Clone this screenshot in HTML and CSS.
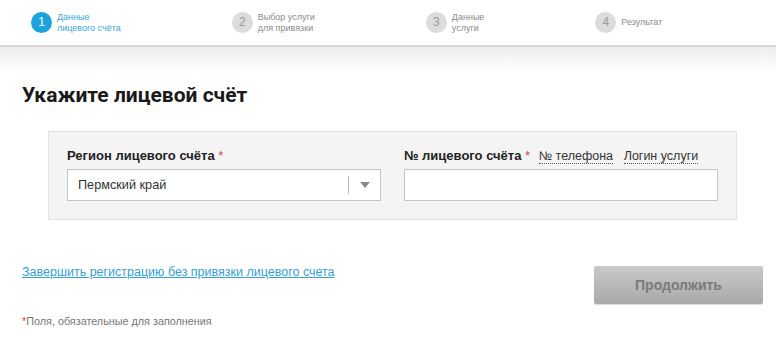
FILE: index.html
```html
<!DOCTYPE html>
<html lang="ru">
<head>
  <meta charset="UTF-8">
  <title>Привязка лицевого счёта</title>
  <link rel="stylesheet" href="styles.css">
</head>
<body>
  <div class="steps">
    <div class="step step-active">
      <span class="step-num">1</span>
      <span class="step-text">Данные<br>лицевого счёта</span>
    </div>
    <div class="step">
      <span class="step-num">2</span>
      <span class="step-text">Выбор услуги<br>для привязки</span>
    </div>
    <div class="step">
      <span class="step-num">3</span>
      <span class="step-text">Данные<br>услуги</span>
    </div>
    <div class="step">
      <span class="step-num">4</span>
      <span class="step-text">Результат</span>
    </div>
  </div>

  <div class="page">
    <h1 class="page-title">Укажите лицевой счёт</h1>

    <div class="form-box">
      <div class="form-col">
        <div class="form-label">Регион лицевого счёта <span class="req">*</span></div>
        <div class="select">
          <span class="select-value">Пермский край</span>
          <span class="select-sep"></span>
          <span class="select-arrow"></span>
        </div>
      </div>
      <div class="form-col">
        <div class="form-label">№ лицевого счёта <span class="req">*</span>
          <a class="switch" href="#">№ телефона</a>
          <a class="switch" href="#">Логин услуги</a>
        </div>
        <input type="text" class="text-input">
      </div>
    </div>

    <div class="actions">
      <a class="skip-link" href="#">Завершить регистрацию без привязки лицевого счета</a>
      <button class="btn-next" disabled>Продолжить</button>
    </div>

    <div class="note"><span class="req">*</span>Поля, обязательные для заполнения</div>
  </div>
</body>
</html>
```

FILE: styles.css
```css
body {
  margin: 0;
  background: #fff;
  font-family: "Liberation Sans", Arial, sans-serif;
  color: #222;
}

/* steps header */
.steps {
  height: 47px;
  border-bottom: 2px solid #d6d6d6;
  display: flex;
  align-items: center;
  gap: 111px;
  padding-left: 31px;
  box-sizing: border-box;
  background: #fff;
}
.step { display: flex; align-items: center; gap: 5px; }
.step-num {
  width: 21px; height: 21px; border-radius: 50%;
  background: #dcdcdc; color: #9a9a9a;
  font-size: 12px; line-height: 21px; text-align: center;
}
.step-text { font-size: 9px; line-height: 11px; color: #8a8a8a; }
.step-active .step-num { background: #1ca3df; color: #fff; }
.step-active .step-text { color: #3ba6d6; }

.page {
  background: linear-gradient(#eeeeee, #fff 26px);
  padding: 35px 13px 20px 22px;
}
.page-title {
  margin: 0 0 23px;
  font-family: Roboto, "Liberation Sans", sans-serif;
  font-weight: 700;
  font-size: 21px;
  line-height: 26px;
  color: #1a1a1a;
}

.form-box {
  margin-left: 26px;
  width: 689px;
  box-sizing: border-box;
  background: #f4f4f4;
  border: 1px solid #e2e2e2;
  padding: 17px 18px 18px 18px;
  display: flex;
  gap: 23px;
}
.form-col { width: 314px; }
.form-label {
  font-size: 13px; font-weight: 700; line-height: 14px;
  margin-bottom: 6px; white-space: nowrap;
}
.req { color: #d9434e; font-weight: 400; }
.switch {
  font-size: 12.5px; font-weight: 400; color: #333; text-decoration: none;
  border-bottom: 1px dotted #555; margin-left: 5px;
}
.switch + .switch { margin-left: 7px; }

.select, .text-input {
  display: flex; align-items: center;
  height: 32px; box-sizing: border-box;
  background: #fff; border: 1px solid #c4c4c4;
  width: 314px;
}
.select-value { flex: 1; padding-left: 10px; font-size: 12.7px; color: #333; }
.select-sep { width: 1px; height: 18px; background: #bdbdbd; }
.select-arrow {
  width: 0; height: 0; margin: 0 10px 0 11px;
  border-left: 5px solid transparent; border-right: 5px solid transparent;
  border-top: 6px solid #8a8a8a;
}
.text-input { margin: 0; outline: none; }

.actions {
  display: flex; justify-content: space-between; align-items: flex-start;
  margin-top: 46px;
}
.skip-link {
  margin-top: -1px;
  font-size: 12.5px; line-height: 14px; color: #35a0d2; text-decoration: underline;
}
.btn-next {
  width: 169px; height: 38px;
  border: none; border-radius: 2px;
  background: linear-gradient(#c9c9c9, #a9a9a9);
  box-shadow: 0 1px 1px rgba(0,0,0,0.15);
  color: #7a7a7a; font-family: "Liberation Sans", Arial, sans-serif;
  font-size: 14px; font-weight: 700;
}

.note { margin-top: 11px; font-size: 10.8px; color: #777; }
```
